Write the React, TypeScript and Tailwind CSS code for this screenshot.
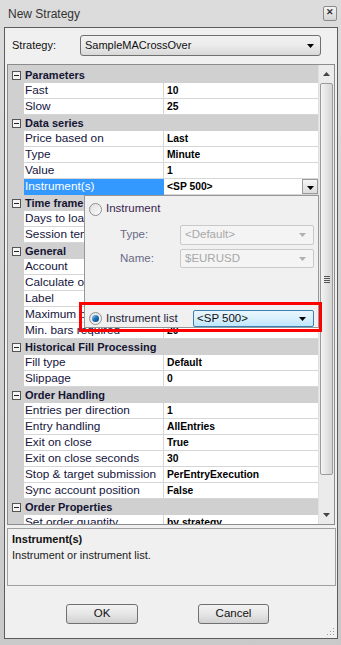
import React from "react";

type Row = { name: string; value: string; selected?: boolean };
type Section = { title: string; rows: Row[] };

const sections: Section[] = [
  { title: "Parameters", rows: [{ name: "Fast", value: "10" }, { name: "Slow", value: "25" }] },
  {
    title: "Data series",
    rows: [
      { name: "Price based on", value: "Last" },
      { name: "Type", value: "Minute" },
      { name: "Value", value: "1" },
      { name: "Instrument(s)", value: "<SP 500>", selected: true },
    ],
  },
  { title: "Time frame", rows: [{ name: "Days to load", value: "5" }, { name: "Session template", value: "<Use instrument settings>" }] },
  {
    title: "General",
    rows: [
      { name: "Account", value: "Sim101" },
      { name: "Calculate on bar close", value: "True" },
      { name: "Label", value: "SampleMACrossOver" },
      { name: "Maximum bars lookback", value: "TwoHundredFiftySix" },
      { name: "Min. bars required", value: "20" },
    ],
  },
  { title: "Historical Fill Processing", rows: [{ name: "Fill type", value: "Default" }, { name: "Slippage", value: "0" }] },
  {
    title: "Order Handling",
    rows: [
      { name: "Entries per direction", value: "1" },
      { name: "Entry handling", value: "AllEntries" },
      { name: "Exit on close", value: "True" },
      { name: "Exit on close seconds", value: "30" },
      { name: "Stop & target submission", value: "PerEntryExecution" },
      { name: "Sync account position", value: "False" },
    ],
  },
  { title: "Order Properties", rows: [{ name: "Set order quantity", value: "by strategy" }] },
];

function Minus() {
  return (
    <div className="w-[9px] h-[9px] border border-[#555] bg-[#f4f4f4] flex items-center justify-center">
      <div className="w-[5px] h-[1px] bg-[#222]" />
    </div>
  );
}

function Arrow({ color = "#000" }: { color?: string }) {
  return (
    <svg width="7" height="4" viewBox="0 0 7 4">
      <path d="M0 0H7L3.5 4Z" fill={color} />
    </svg>
  );
}

function Header({ title }: { title: string }) {
  return (
    <div className="flex h-[16px]">
      <div className="w-[16px] flex items-center justify-center">
        <Minus />
      </div>
      <div className="flex-1 flex items-center pl-[1px] font-bold text-[#141433] text-[11px]">
        {title}
      </div>
    </div>
  );
}

function DataRow({ row }: { row: Row }) {
  return (
    <div className="flex h-[16px]">
      <div className="w-[16px]" />
      <div
        className={
          row.selected
            ? "w-[140px] bg-[#3399ff] text-white text-[11.8px] border-r border-b border-[#3399ff] flex items-center pl-[1px] whitespace-nowrap overflow-hidden"
            : "w-[140px] bg-white text-[#14143c] text-[11.8px] border-r border-b border-[#d6d6d6] flex items-center pl-[1px] whitespace-nowrap overflow-hidden"
        }
      >
        {row.name}
      </div>
      <div className="flex-1 bg-white border-b border-[#d6d6d6] flex items-center pl-[3px] font-bold text-[10.3px] whitespace-nowrap overflow-hidden">
        <span className="flex-1">{row.value}</span>
        {row.selected && (
          <div className="w-[16px] h-[15px] border border-[#9a9a9a] bg-gradient-to-b from-[#f6f6f6] to-[#dcdcdc] flex items-end justify-center pb-[3px]">
            <Arrow />
          </div>
        )}
      </div>
    </div>
  );
}

function Scrollbar() {
  return (
    <div className="w-[16px] bg-[#ebebeb] flex flex-col border-l border-[#e0e0e0]">
      <div className="h-[18px] flex items-center justify-center">
        <svg width="7" height="4" viewBox="0 0 7 4">
          <path d="M0 4H7L3.5 0Z" fill="#444" />
        </svg>
      </div>
      <div className="mx-[1px] h-[392px] rounded-[2px] border border-[#9b9b9b] bg-gradient-to-r from-[#f3f3f3] via-[#e4e4e4] to-[#d4d4d4] flex items-center justify-center">
        <div className="flex flex-col gap-[1px]">
          <div className="w-[6px] h-[1px] bg-[#555]" />
          <div className="w-[6px] h-[1px] bg-[#555]" />
          <div className="w-[6px] h-[1px] bg-[#555]" />
          <div className="w-[6px] h-[1px] bg-[#555]" />
        </div>
      </div>
      <div className="flex-1" />
      <div className="h-[18px] flex items-center justify-center">
        <Arrow color="#444" />
      </div>
    </div>
  );
}

function Radio({ checked }: { checked?: boolean }) {
  return (
    <div className="w-[13px] h-[13px] rounded-full border border-[#8e8f8f] bg-gradient-to-br from-[#e0e0e0] to-[#fafafa] flex items-center justify-center">
      {checked && <div className="w-[7px] h-[7px] rounded-full bg-gradient-to-br from-[#8fd0f5] via-[#1c6fb5] to-[#0b3f7a]" />}
    </div>
  );
}

export default function App() {
  return (
    <div className="relative w-[341px] h-[645px] overflow-hidden bg-gradient-to-b from-[#dcdcdc] to-[#c9c9c9] font-['Liberation_Sans',Arial,sans-serif] text-[11px] text-black">
      {/* title bar */}
      <div className="h-[27px] flex items-center pl-[8px] pr-[4px]">
        <span className="text-[12px] text-[#333]">New Strategy</span>
        <div className="ml-auto mb-[1px] w-[14px] h-[15px] border border-[#8a8a8a] rounded-[2px] bg-gradient-to-b from-[#f4f4f4] to-[#d4d4d4] flex items-center justify-center text-[9px] font-bold text-[#333]">
          ✕
        </div>
      </div>

      {/* client */}
      <div className="ml-[4px] w-[334px] h-[612px] border border-[#5c5c5c] bg-[#f0f0f0] flex flex-col relative">
        {/* strategy row */}
        <div className="mt-[7px] h-[21px] flex items-center">
          <div className="w-[75px] pl-[7px] text-[11px] text-[#111]">Strategy:</div>
          <div className="w-[241px] h-[21px] rounded-[3px] border border-[#707070] bg-gradient-to-b from-[#f2f2f2] via-[#ebebeb] to-[#d8d8d8] flex items-center pl-[4px] pr-[6px]">
            <span className="flex-1 text-[11px] text-[#111]">SampleMACrossOver</span>
            <Arrow />
          </div>
        </div>

        {/* property grid */}
        <div className="mt-[8px] ml-[2px] w-[328px] h-[461px] border border-[#8c8c8c] flex">
          <div className="w-[310px] bg-[#d0d0d0] pt-[2px] overflow-hidden">
            {sections.map((s) => (
              <div key={s.title}>
                <Header title={s.title} />
                {s.rows.map((r) => (
                  <DataRow key={r.name} row={r} />
                ))}
              </div>
            ))}
          </div>
          <Scrollbar />
        </div>

        {/* description */}
        <div className="mt-[3px] ml-[2px] w-[329px] h-[58px] border border-[#a0a0a0] bg-[#f0f0f0] pl-[4px] pt-[2px]">
          <div className="font-bold text-[11px] text-[#111] leading-[16px]">Instrument(s)</div>
          <div className="text-[11px] text-[#222] leading-[16px]">Instrument or instrument list.</div>
        </div>

        {/* buttons */}
        <div className="mt-[18px] flex">
          <div className="ml-[61px] w-[72px] h-[20px] rounded-[3px] border border-[#707070] bg-gradient-to-b from-[#f2f2f2] via-[#e6e6e6] to-[#d0d0d0] flex items-center justify-center text-[11.5px] text-[#111]">
            OK
          </div>
          <div className="ml-[60px] w-[71px] h-[20px] rounded-[3px] border border-[#707070] bg-gradient-to-b from-[#f2f2f2] via-[#e6e6e6] to-[#d0d0d0] flex items-center justify-center text-[11.5px] text-[#111]">
            Cancel
          </div>
        </div>

        {/* resize grip */}
        <svg className="absolute right-[2px] bottom-[2px]" width="9" height="9" viewBox="0 0 9 9">
          <rect x="7" y="1" width="1" height="1" fill="#9a9a9a" />
          <rect x="4" y="4" width="1" height="1" fill="#9a9a9a" />
          <rect x="7" y="4" width="1" height="1" fill="#9a9a9a" />
          <rect x="1" y="7" width="1" height="1" fill="#9a9a9a" />
          <rect x="4" y="7" width="1" height="1" fill="#9a9a9a" />
          <rect x="7" y="7" width="1" height="1" fill="#9a9a9a" />
        </svg>
      </div>

      {/* dropdown popup */}
      <div className="absolute left-[84px] top-[195px] w-[235px] h-[133px] border border-[#979797] bg-[#f0f0f0] flex flex-col text-[11.5px]">
        <div className="mt-[6px] ml-[4px] flex items-center gap-[4px] h-[14px]">
          <Radio />
          <span className="text-[#3a2553]">Instrument</span>
        </div>
        <div className="mt-[9px] flex items-center h-[20px]">
          <span className="w-[95px] pl-[35px] text-[#6a6a86]">Type:</span>
          <div className="w-[134px] h-[20px] rounded-[2px] border border-[#c9c9c9] bg-[#f4f4f4] flex items-center pl-[4px] pr-[7px] text-[#a8a8a8]">
            <span className="flex-1">&lt;Default&gt;</span>
            <Arrow color="#b0b0b0" />
          </div>
        </div>
        <div className="mt-[4px] flex items-center h-[19px]">
          <span className="w-[95px] pl-[35px] text-[#6a6a86]">Name:</span>
          <div className="w-[134px] h-[19px] rounded-[2px] border border-[#c9c9c9] bg-[#f4f4f4] flex items-center pl-[4px] pr-[7px] text-[#a8a8a8]">
            <span className="flex-1">$EURUSD</span>
            <Arrow color="#b0b0b0" />
          </div>
        </div>
        <div className="mt-[42px] flex items-center h-[17px]">
          <div className="ml-[4px] flex items-center gap-[4px] w-[104px]">
            <Radio checked />
            <span className="text-[#1e1e3c]">Instrument list</span>
          </div>
          <div className="w-[121px] h-[17px] rounded-[2px] border border-[#3c7fb1] bg-gradient-to-b from-[#eaf6fd] via-[#d9f0fc] to-[#bee6fd] flex items-center pl-[3px] pr-[7px] text-[#111]">
            <span className="flex-1">&lt;SP 500&gt;</span>
            <Arrow />
          </div>
        </div>
      </div>

      {/* red highlight */}
      <div className="absolute left-[79px] top-[302px] w-[243px] h-[30px] border-[3px] border-[#ff0000] pointer-events-none" />
    </div>
  );
}
